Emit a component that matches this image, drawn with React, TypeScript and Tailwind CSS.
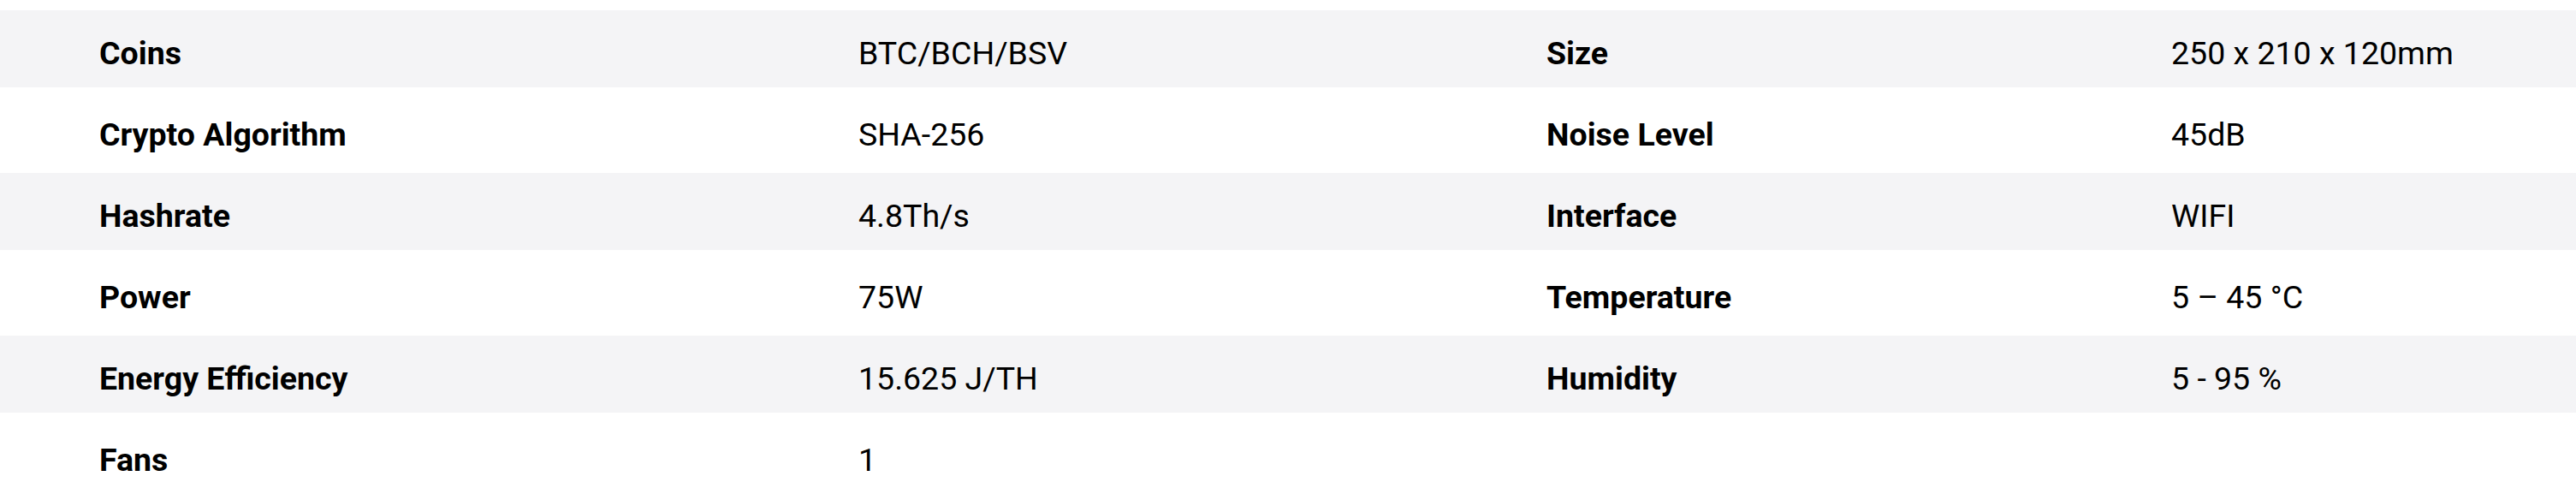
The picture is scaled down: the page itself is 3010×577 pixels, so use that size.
import React from 'react';

type Spec = { label: string; value: string };

const ROWS: [Spec, Spec | null][] = [
  [{ label: 'Coins', value: 'BTC/BCH/BSV' }, { label: 'Size', value: '250 x 210 x 120mm' }],
  [{ label: 'Crypto Algorithm', value: 'SHA-256' }, { label: 'Noise Level', value: '45dB' }],
  [{ label: 'Hashrate', value: '4.8Th/s' }, { label: 'Interface', value: 'WIFI' }],
  [{ label: 'Power', value: '75W' }, { label: 'Temperature', value: '5 – 45 °C' }],
  [{ label: 'Energy Efficiency', value: '15.625 J/TH' }, { label: 'Humidity', value: '5 - 95 %' }],
  [{ label: 'Fans', value: '1' }, null],
];

export default function App() {
  return (
    <div className="w-[3010px] h-[577px] overflow-hidden bg-white pt-[12px] font-['Roboto',sans-serif] text-[37.5px] text-black">
      {ROWS.map(([left, right], i) => (
        <div
          key={left.label}
          className={`grid grid-cols-[887px_804px_730px_1fr] items-center pl-[116px] pt-[10px] ${
            i % 2 === 0 ? 'h-[90px] bg-[#f4f4f6]' : 'h-[100px] bg-white'
          }`}
        >
          <span className="font-bold">{left.label}</span>
          <span>{left.value}</span>
          <span className="font-bold">{right?.label}</span>
          <span>{right?.value}</span>
        </div>
      ))}
    </div>
  );
}
